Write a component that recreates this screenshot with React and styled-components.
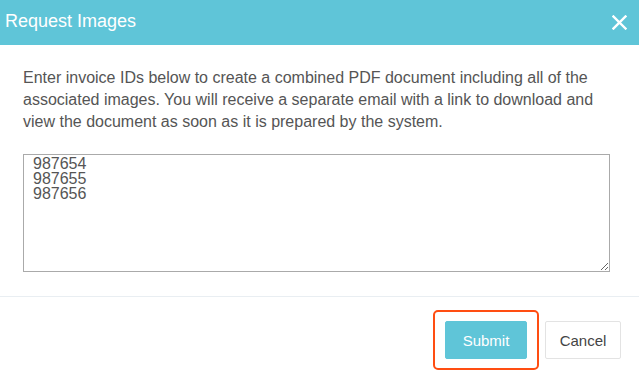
import React from 'react';
import styled, { createGlobalStyle } from 'styled-components';

const GlobalStyle = createGlobalStyle`
  html, body {
    margin: 0;
    padding: 0;
    background: #fff;
    font-family: "Liberation Sans", Arial, sans-serif;
  }
`;

const Modal = styled.div`
  width: 639px;
  height: 371px;
  display: flex;
  flex-direction: column;
  background: #fff;
  overflow: hidden;
`;

const Header = styled.div`
  height: 45px;
  flex: none;
  display: flex;
  align-items: center;
  justify-content: space-between;
  padding: 0 10px 0 5px;
  background: #5fc5d8;
  color: #fff;
`;

const Title = styled.h4`
  margin: 0 0 3px;
  font-size: 18px;
  font-weight: normal;
`;

const CloseButton = styled.button`
  border: 0;
  background: none;
  padding: 0;
  width: 20px;
  height: 20px;
  display: flex;
  align-items: center;
  justify-content: center;
  cursor: pointer;
`;

const Body = styled.div`
  padding: 22px 23px 24px;
  border-bottom: 1px solid #e9eef2;
`;

const Intro = styled.p`
  margin: 0 0 21px;
  font-size: 16px;
  line-height: 22px;
  color: #555;
`;

const Ids = styled.textarea`
  display: block;
  box-sizing: border-box;
  width: 587px;
  height: 118px;
  margin: 0;
  padding: 1px 9px;
  border: 1px solid #aaa;
  font-family: "Liberation Sans", Arial, sans-serif;
  font-size: 16px;
  line-height: 15px;
  color: #555;
  outline: none;
`;

const Footer = styled.div`
  display: flex;
  justify-content: flex-end;
  align-items: center;
  gap: 6px;
  padding: 13px 18px 0 0;
`;

const Highlight = styled.div`
  border: 2px solid #ff4d12;
  border-radius: 5px;
  padding: 9px 10px;
`;

const Button = styled.button`
  box-sizing: border-box;
  height: 38px;
  padding: 0;
  font-family: "Liberation Sans", Arial, sans-serif;
  font-size: 15px;
  border-radius: 2px;
  cursor: pointer;
  border: 1px solid ${(p) => (p.$primary ? '#5fc5d8' : '#e3e3e3')};
  background: ${(p) => (p.$primary ? '#5fc5d8' : '#fff')};
  color: ${(p) => (p.$primary ? '#fff' : '#444')};
  width: ${(p) => p.$width}px;
`;

export default function App() {
  return (
    <>
      <GlobalStyle />
      <Modal>
        <Header>
          <Title>Request Images</Title>
          <CloseButton aria-label="Close">
            <svg width="15" height="15" viewBox="0 0 15 15">
              <path d="M1.5 1.5 L13.5 13.5 M13.5 1.5 L1.5 13.5" stroke="#fff" strokeWidth="2.4" strokeLinecap="square" />
            </svg>
          </CloseButton>
        </Header>
        <Body>
          <Intro>
            Enter invoice IDs below to create a combined PDF document including all of the
            associated images. You will receive a separate email with a link to download and
            view the document as soon as it is prepared by the system.
          </Intro>
          <Ids defaultValue={'987654\n987655\n987656'} />
        </Body>
        <Footer>
          <Highlight>
            <Button $primary $width={82}>Submit</Button>
          </Highlight>
          <Button $width={76}>Cancel</Button>
        </Footer>
      </Modal>
    </>
  );
}
